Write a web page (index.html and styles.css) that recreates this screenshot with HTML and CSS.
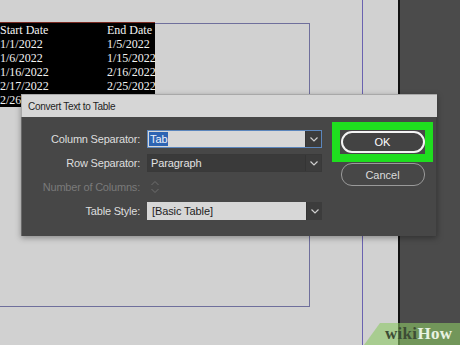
FILE: index.html
```html
<!DOCTYPE html>
<html lang="en">
	<head>
		<meta charset="UTF-8" />
		<meta name="viewport" content="width=device-width, initial-scale=1.0" />
		<title>Convert Text to Table</title>
		<link rel="stylesheet" href="styles.css">
	</head>
	<body>
		<div class="workspace">
			<div class="page">
				<div class="guide-box"></div>
				<div class="guide-line"></div>

				<div class="text-frame">
					<div class="row"><span>Start Date</span><span>End Date</span></div>
					<div class="row"><span>1/1/2022</span><span>1/5/2022</span></div>
					<div class="row"><span>1/6/2022</span><span>1/15/2022</span></div>
					<div class="row"><span>1/16/2022</span><span>2/16/2022</span></div>
					<div class="row"><span>2/17/2022</span><span>2/25/2022</span></div>
					<div class="row"><span>2/26</span><span></span></div>
				</div>
			</div>
			<div class="pasteboard"></div>
		</div>

		<div class="dialog">
			<div class="dialog-title">Convert Text to Table</div>
			<div class="dialog-body">
				<div class="form">
					<label>Column Separator:</label>
					<div class="select light focus">
						<span class="value"><span class="selected">Tab</span></span>
						<span class="arrow">
							<svg width="8" height="5" viewBox="0 0 8 5"><path d="M0.5 0.5 L4 4 L7.5 0.5" fill="none" stroke="#cfcfcf" stroke-width="1.2"/></svg>
						</span>
					</div>

					<label>Row Separator:</label>
					<div class="select dark">
						<span class="value">Paragraph</span>
						<span class="arrow">
							<svg width="8" height="5" viewBox="0 0 8 5"><path d="M0.5 0.5 L4 4 L7.5 0.5" fill="none" stroke="#cfcfcf" stroke-width="1.2"/></svg>
						</span>
					</div>

					<label class="disabled">Number of Columns:</label>
					<div class="spinner">
						<svg width="10" height="16" viewBox="0 0 10 16">
							<path d="M1.5 6 L5 2.5 L8.5 6" fill="none" stroke="#6e6e6e" stroke-width="1"/>
							<path d="M1.5 10 L5 13.5 L8.5 10" fill="none" stroke="#6e6e6e" stroke-width="1"/>
						</svg>
					</div>

					<label>Table Style:</label>
					<div class="select light">
						<span class="value">[Basic Table]</span>
						<span class="arrow">
							<svg width="8" height="5" viewBox="0 0 8 5"><path d="M0.5 0.5 L4 4 L7.5 0.5" fill="none" stroke="#cfcfcf" stroke-width="1.2"/></svg>
						</span>
					</div>
				</div>

				<div class="actions">
					<div class="highlight">
						<button class="btn btn-ok">OK</button>
					</div>
					<button class="btn btn-cancel">Cancel</button>
				</div>
			</div>
		</div>

		<div class="watermark"><span class="wiki">wiki</span><span class="how">How</span></div>
	</body>
</html>
```

FILE: styles.css
```css
body {
	margin: 0;
	width: 460px;
	height: 345px;
	overflow: hidden;
	position: relative;
	background-color: #4a4a4a;
	font-family: "Liberation Sans", Arial, sans-serif;
}

.workspace {
	display: flex;
	height: 345px;
}

.page {
	position: relative;
	width: 398px;
	background-color: #d1d1d1;
	border-right: 2px solid #111;
	overflow: hidden;
}

.pasteboard {
	flex: 1;
	background-color: #4b4b4b;
}

/* margin guides */
.guide-box {
	position: absolute;
	left: -20px;
	top: 23px;
	width: 329px;
	height: 282px;
	border: 1px solid #6f6f9c;
	border-left: none;
}

.guide-line {
	position: absolute;
	left: 362px;
	top: 0;
	bottom: 0;
	width: 1px;
	background-color: #6a62b0;
}

.text-frame {
	position: absolute;
	left: 0;
	top: 22px;
	width: 155px;
	background-color: #000;
	border-top: 1px solid #7a2a22;
	font-family: "Liberation Serif", "Times New Roman", serif;
	font-size: 12px;
	color: #f2f2f2;
}

.text-frame .row {
	display: grid;
	grid-template-columns: 107px auto;
	line-height: 14px;
	height: 14px;
	white-space: nowrap;
}

/* dialog */
.dialog {
	position: absolute;
	left: 21px;
	top: 94px;
	width: 416px;
	height: 142px;
	background-color: #474747;
	box-shadow: 0 2px 6px rgba(0, 0, 0, 0.35);
	display: flex;
	flex-direction: column;
}

.dialog-title {
	height: 22px;
	line-height: 23px;
	background-color: #d6d6d6;
	border-top: 1px solid #a8a8a8;
	border-left: 1px solid #a8a8a8;
	padding-left: 6px;
	font-size: 10px;
	letter-spacing: -0.3px;
	color: #1e1e1e;
}

.dialog-body {
	flex: 1;
	display: flex;
	border-left: 1px solid #6a6a6a;
	border-right: 1px solid #3e3e3e;
}

.form {
	display: grid;
	grid-template-columns: 118px 175px;
	grid-auto-rows: 18px;
	column-gap: 7px;
	row-gap: 6px;
	margin-top: 13px;
	align-items: center;
}

.form label {
	text-align: right;
	font-size: 11px;
	letter-spacing: -0.2px;
	color: #dedede;
}

.form label.disabled {
	color: #7a7a7a;
}

.select {
	display: flex;
	height: 18px;
	box-sizing: border-box;
	font-size: 11px;
	letter-spacing: -0.1px;
}

.select .value {
	flex: 1;
	display: flex;
	align-items: center;
	padding-left: 3px;
}

.select .arrow {
	width: 15px;
	display: flex;
	align-items: center;
	justify-content: center;
	background-color: #3c3c3c;
	border-left: 1px solid #343434;
}

.select.light .value {
	background-color: #d7d7d7;
	color: #1e1e1e;
}

.select.dark {
	border: 1px solid #393939;
}

.select.dark .value {
	background-color: #3a3a3a;
	color: #e2e2e2;
}

.select.focus {
	border: 1px solid #5b86bd;
}

.select.focus .value {
	padding-left: 1px;
}

.select .selected {
	background-color: #2d64b3;
	color: #eef2fa;
	padding: 1px 1px;
}

.select:last-child .value {
	padding-left: 5px;
}

.spinner {
	height: 18px;
	display: flex;
	align-items: center;
	padding-left: 3px;
}

.actions {
	display: flex;
	flex-direction: column;
	align-items: center;
	margin-left: 10px;
	margin-top: 5px;
	width: 101px;
}

.highlight {
	width: 101px;
	height: 40px;
	box-sizing: border-box;
	border: 8px solid #1fde1f;
	display: flex;
	align-items: center;
	justify-content: center;
}

.btn {
	width: 84px;
	height: 22px;
	border-radius: 11px;
	background-color: #434343;
	font-family: "Liberation Sans", Arial, sans-serif;
	font-size: 11px;
	padding: 0;
	cursor: pointer;
}

.btn-ok {
	border: 2px solid #f4f4f4;
	color: #ffffff;
}

.btn-cancel {
	margin-top: 1px;
	height: 23px;
	border: 1px solid #9a9a9a;
	background-color: #474747;
	color: #dcdcdc;
}

/* watermark */
.watermark {
	position: absolute;
	left: 364px;
	top: 323px;
	width: 110px;
	height: 22px;
	background-color: rgba(140, 200, 100, 0.6);
	clip-path: polygon(16px 0, 100% 0, 100% 100%, 0 100%);
	font-family: "Liberation Serif", "Times New Roman", serif;
	font-weight: bold;
	font-size: 17px;
	line-height: 22px;
	padding-left: 21px;
	box-sizing: border-box;
	letter-spacing: 0.3px;
}

.watermark .wiki {
	color: #3d4d35;
}

.watermark .how {
	color: #e9f2e2;
}
```
